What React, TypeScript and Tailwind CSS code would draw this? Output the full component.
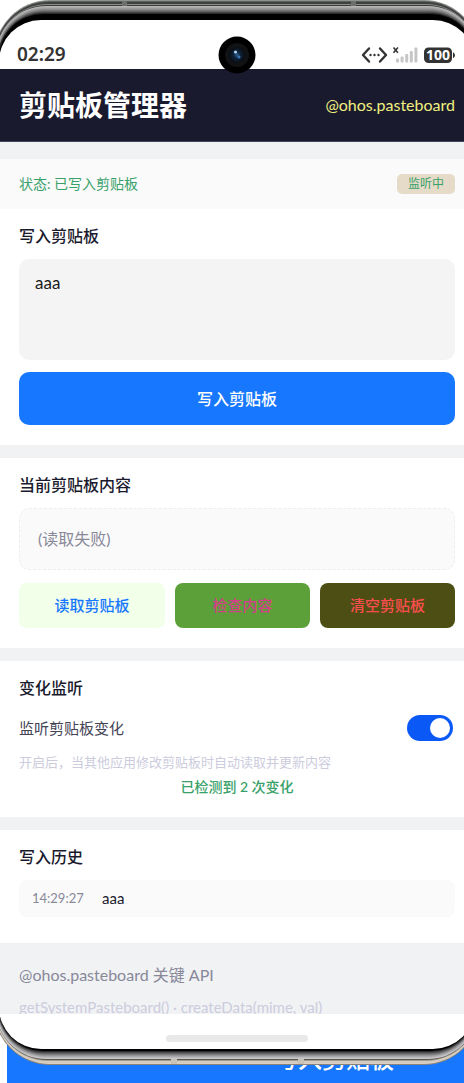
import { useState } from 'react'
import type { ReactNode } from 'react'

interface HistoryItem {
  time: string
  content: string
}

// Metal rings of the device, from the outer edge to the glass
const frameLayers = [
  'inset-0 rounded-[56px] bg-linear-to-b from-[#8f938f] to-[#8a8378]',
  'inset-x-px top-px bottom-px rounded-[55px] bg-linear-to-b from-[#5c5f5c] to-[#d8d0c4]',
  'inset-x-px top-[2px] bottom-[2px] rounded-[54px] bg-linear-to-b from-[#3e403e] to-[#d5ccc0]',
  'inset-x-[2px] top-[4px] bottom-[4px] rounded-[52px] bg-linear-to-b from-[#8b8d8b] to-[#a39b90]',
  'inset-x-[2px] top-[5px] bottom-[5px] rounded-[51px] bg-linear-to-b from-[#3a3a3a] to-[#5a5650]',
  'inset-x-[2px] top-[6px] bottom-[6px] rounded-[50px] bg-linear-to-b from-[#b6b6b6] to-[#c8c7ca]',
  'inset-x-[3px] top-[7px] bottom-[7px] rounded-[49px] bg-linear-to-b from-[#aaaaaa] to-[#b8b7ba]',
  'inset-x-[3px] top-[8px] bottom-[8px] rounded-[49px] bg-linear-to-b from-[#9b9b9b] to-[#a7a7aa]',
  'inset-x-[3px] top-[9px] bottom-[9px] rounded-[48px] bg-linear-to-b from-[#8a8a8a] to-[#949496]',
  'inset-x-[4px] top-[10px] bottom-[10px] rounded-[47px] bg-linear-to-b from-[#757575] to-[#7d7d80]',
  'inset-x-[4px] top-[11px] bottom-[11px] rounded-[46px] bg-linear-to-b from-[#606060] to-[#666668]',
  'inset-x-[4px] top-[12px] bottom-[12px] rounded-[46px] bg-linear-to-b from-[#454545] to-[#4a4a4c]',
  'inset-x-[4px] top-[13px] bottom-[13px] rounded-[45px] bg-linear-to-b from-[#2a2a2a] to-[#2c2c2e]',
  'inset-x-[5px] top-[14px] bottom-[14px] rounded-[44px] bg-black',
]

const initialHistory: HistoryItem[] = [{ time: '14:29:27', content: 'aaa' }]

function StatusBar() {
  return (
    <div className="relative flex h-[49px] items-end justify-between pr-5 pb-[4px] pl-[18px]">
      <span className="font-['Noto_Sans'] text-[19px] leading-[22px] font-semibold text-[#333333]">02:29</span>
      <svg width="94" height="20" viewBox="0 0 94 20" className="mb-[1px]">
        <g fill="none" stroke="#333333" strokeWidth="2.4" strokeLinecap="round" strokeLinejoin="round">
          <path d="M8 4.500L2 11l6 6.500M19 4.500L25 11l-6 6.500" />
        </g>
        <g fill="#333333">
          <circle cx="9.500" cy="11" r="1.200" />
          <circle cx="13.500" cy="11" r="1.200" />
          <circle cx="17.500" cy="11" r="1.200" />
        </g>
        <path d="M32.500 3.500l4.400 5.200M36.900 3.500l-4.400 5.200" stroke="#333333" strokeWidth="1.600" />
        <g fill="#c6c6c6">
          <rect x="35" y="14.500" width="3" height="4" rx="1" />
          <rect x="39.600" y="12.500" width="3" height="6" rx="1" />
          <rect x="44.200" y="10" width="3" height="8.500" rx="1" />
          <rect x="48.800" y="7" width="3" height="11.500" rx="1" />
          <rect x="53.400" y="3.500" width="3" height="15" rx="1" />
        </g>
        <rect x="63" y="3.500" width="28" height="15.500" rx="4.500" fill="#333333" />
        <path d="M92 8.500h.5q1.500 1 1.500 2.700t-1.500 2.800H92z" fill="#333333" />
        <text x="77" y="16" textAnchor="middle" fill="#ffffff" fontSize="14" fontWeight="700" fontFamily="Noto Sans, sans-serif">
          100
        </text>
      </svg>
      <svg width="38" height="38" viewBox="0 0 38 38" className="absolute top-[16px] left-1/2 z-10 -translate-x-1/2">
        <defs>
          <radialGradient id="lens">
            <stop offset="0" stopColor="#2f5f92" />
            <stop offset="0.4" stopColor="#10253e" />
            <stop offset="1" stopColor="#090c12" />
          </radialGradient>
        </defs>
        <circle cx="19" cy="19" r="18.500" fill="#000000" />
        <circle cx="19" cy="19" r="12" fill="#111214" />
        <circle cx="19" cy="19" r="8" fill="url(#lens)" />
        <circle cx="17.500" cy="16" r="1.600" fill="#a9d3f5" />
        <circle cx="21" cy="21" r="1.500" fill="#3a78b8" />
      </svg>
    </div>
  )
}

function Section({ title, children }: { title: string; children: ReactNode }) {
  return (
    <section className="bg-white px-5 pt-[14px] pb-5">
      <h2 className="text-base leading-[26px] font-medium text-[#1a1a2e]">{title}</h2>
      {children}
    </section>
  )
}

export default function App() {
  const [text, setText] = useState('aaa')
  const [listening, setListening] = useState(true)
  const [history, setHistory] = useState<HistoryItem[]>(initialHistory)

  const writeText = () => {
    const time = new Date().toLocaleTimeString('en-US', { hour12: false })
    setHistory((prev) => [{ time, content: text }, ...prev])
  }

  return (
    <div className="overflow-hidden bg-white font-[Lato,'Noto_Sans_CJK_SC',sans-serif]">
      <div className="relative z-10 -mr-[16px] -ml-[6px] px-[5px] pt-5 pb-4">
        {frameLayers.map((layer) => (
          <div key={layer} className={`absolute ${layer}`} />
        ))}
        <span className="absolute top-px left-[128px] h-[5px] w-[5px] bg-[#6d6f6d]" />
        <span className="absolute top-px right-[124px] h-[5px] w-[5px] bg-[#6d6f6d]" />
        <span className="absolute bottom-px left-[177px] h-[5px] w-[6px] bg-[#c9c2b8]" />
        <span className="absolute right-[176px] bottom-px h-[5px] w-[6px] bg-[#c9c2b8]" />

        <div className="relative rounded-[42px] bg-white">
          <StatusBar />

          <main className="bg-[#f1f2f4]">
            <header className="flex h-[73px] items-center justify-between border-b border-[#46445a] bg-[#1a1a2e] px-5">
              <h1 className="text-[28px] leading-9 font-bold text-white">剪贴板管理器</h1>
              <span className="text-base text-[#f0f080]">@ohos.pasteboard</span>
            </header>

            <div className="mt-[17px] flex h-[50px] items-center justify-between bg-[#fafafa] px-5">
              <span className="text-sm text-[#38a169]">状态: 已写入剪贴板</span>
              <span className="rounded-[5px] bg-[#e6dbc8] px-[11px] text-xs leading-5 text-[#38a169]">监听中</span>
            </div>

            <div className="flex flex-col gap-[13px]">
              <Section title="写入剪贴板">
                <textarea
                  aria-label="写入剪贴板"
                  value={text}
                  onChange={(e) => setText(e.target.value)}
                  className="mt-[10px] block h-[101px] w-full resize-none rounded-[10px] bg-[#f4f4f4] px-4 py-3 text-[17px] leading-6 text-[#1a1a1a] outline-none"
                />
                <button
                  type="button"
                  onClick={writeText}
                  className="mt-3 block h-[53px] w-full rounded-[10px] bg-[#1877ff] text-base font-medium text-white"
                >
                  写入剪贴板
                </button>
              </Section>

              <Section title="当前剪贴板内容">
                <p className="mt-[10px] rounded-[10px] border border-dashed border-[#eeeeee] bg-[#fafafa] px-[18px] py-[18px] text-base leading-6 text-[#888899]">
                  (读取失败)
                </p>
                <div className="mt-[13px] grid grid-cols-[13fr_12fr_12fr] gap-[10px] text-[15px]">
                  <button type="button" className="h-[45px] rounded-lg bg-[#f2ffe9] font-medium text-[#1877ff]">
                    读取剪贴板
                  </button>
                  <button type="button" className="h-[45px] rounded-lg bg-[#5ca039] font-medium text-[#d13f86]">
                    检查内容
                  </button>
                  <button type="button" className="h-[45px] rounded-lg bg-[#4d4e13] font-medium text-[#ff4d4f]">
                    清空剪贴板
                  </button>
                </div>
              </Section>

              <Section title="变化监听">
                <div className="mt-[14px] flex h-[26px] items-center justify-between pr-[2px]">
                  <label htmlFor="listen" className="text-[15px] text-[#444455]">
                    监听剪贴板变化
                  </label>
                  <input
                    id="listen"
                    type="checkbox"
                    role="switch"
                    checked={listening}
                    onChange={(e) => setListening(e.target.checked)}
                    className="h-[26px] w-[46px] appearance-none rounded-full bg-gray-300 p-[3px] before:block before:size-5 before:rounded-full before:bg-white checked:bg-[#0a59f7] checked:before:ml-5"
                  />
                </div>
                <p className="mt-[11px] text-[13px] leading-5 whitespace-nowrap text-[#ccccdd]">
                  开启后，当其他应用修改剪贴板时自动读取并更新内容
                </p>
                <p className="mt-[5px] text-center text-sm leading-5 font-medium text-[#38a169]">已检测到 2 次变化</p>
              </Section>

              <Section title="写入历史">
                <ul className="mt-[10px] mb-[6px] flex flex-col gap-2">
                  {history.map((item, i) => (
                    <li key={i} className="flex h-[37px] items-center rounded-lg bg-[#fafafa] px-[13px]">
                      <time className="w-[70px] text-[13px] text-[#888899]">{item.time}</time>
                      <span className="text-[15px] text-[#1a1a2e]">{item.content}</span>
                    </li>
                  ))}
                </ul>
              </Section>
            </div>

            <footer className="h-[71px] overflow-hidden px-5 pt-5 text-[#888899]">
              <p className="text-base leading-6">@ohos.pasteboard 关键 API</p>
              <p className="mt-[10px] text-[15px] leading-5 text-[#ccccdd]">getSystemPasteboard() · createData(mime, val)</p>
            </footer>
          </main>

          <div className="flex h-[35px] items-center justify-center pt-[14px]">
            <div className="h-[7px] w-[142px] rounded-full bg-[#e9e9e9]" />
          </div>
        </div>
      </div>

      <button
        type="button"
        className="-mt-[30px] ml-[7px] block h-[48px] w-[654px] bg-[#1877ff] text-2xl leading-[48px] font-medium text-white"
      >
        写入剪贴板
      </button>
    </div>
  )
}
